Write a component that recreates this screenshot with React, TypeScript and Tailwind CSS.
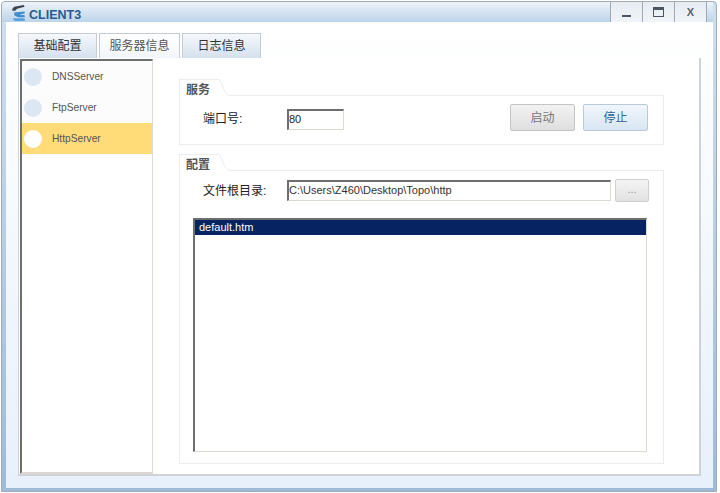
const FONT = 'font-["Liberation_Sans","Noto_Sans_CJK_SC",sans-serif]';

function AppIcon() {
  return (
    <svg width="18" height="18" viewBox="0 0 18 19" className="mt-[2px] shrink-0">
      <path d="M2 5 L4 3 L14 1 L15 3 L7 5 L5 7 L2 7 Z" fill="#3c4650" />
      <path d="M4 9 L15 8 L15 10 L9 11 L15 12 L15 14 L8 14 L4 12 Z" fill="#3f8ccf" />
      <path d="M3 15 L15 15 L15 18 L5 18 L3 17 Z" fill="#5aa3de" />
    </svg>
  );
}

function WindowButton({ children, last }: { children: React.ReactNode; last?: boolean }) {
  return (
    <div
      className={`flex h-[21px] items-center justify-center border-b border-l border-[#9fa8b3] ${
        last ? 'w-[33px] border-r' : 'w-[32px]'
      } bg-gradient-to-b from-[#e6ecf3] to-[#f1f4f8]`}
    >
      {children}
    </div>
  );
}

function Tab({ label, active, width }: { label: string; active?: boolean; width: string }) {
  return (
    <div
      className={`flex h-[25px] items-center justify-center border border-b-0 border-[#c5cbd2] text-[12px] ${width} ${
        active
          ? 'bg-gradient-to-b from-white to-[#f3f6fa] text-[#555]'
          : 'bg-gradient-to-b from-[#f5f8fc] to-[#d5e1ee] text-[#333]'
      }`}
    >
      {label}
    </div>
  );
}

function ServerRow({ name, selected }: { name: string; selected?: boolean }) {
  return (
    <div className={`flex h-[31px] items-center pl-[2px] ${selected ? 'bg-[#ffdc78]' : ''}`}>
      <div className={`h-[18px] w-[18px] rounded-full ${selected ? 'bg-white' : 'bg-[#dce7f3]'}`} />
      <span className="ml-[10px] text-[10.2px] text-[#555]">{name}</span>
    </div>
  );
}

function GroupBox({ title, className, children }: { title: string; className: string; children: React.ReactNode }) {
  return (
    <div className={`flex flex-col ${className}`}>
      <div className="flex h-[17px] shrink-0 items-end">
        <div className="flex h-[17px] w-[39px] items-center border-l border-t border-[#ececec] bg-white pl-[6px] pt-[3px] text-[12px] font-bold text-[#555]">
          {title}
        </div>
        <svg width="13" height="17" viewBox="0 0 13 17" className="shrink-0">
          <path d="M0 0.5 L1 0.5 C4 3 6 16.5 12 16.5 L13 16.5" fill="none" stroke="#ececec" />
        </svg>
        <div className="h-px flex-1 bg-[#ececec]" />
      </div>
      <div className="min-h-0 flex-1 border border-t-0 border-[#ececec]">{children}</div>
    </div>
  );
}

function Sunken({ className, children }: { className: string; children?: React.ReactNode }) {
  return (
    <div className={`border-t-2 border-l-2 border-r border-b border-t-[#6e6e6e] border-l-[#6e6e6e] border-r-[#dcd9d2] border-b-[#dcd9d2] bg-white ${className}`}>
      {children}
    </div>
  );
}

export default function App() {
  return (
    <div className={`h-[493px] w-[720px] overflow-hidden bg-white pl-px pt-px ${FONT}`}>
      <div className="flex h-[491px] w-[716px] flex-col rounded-t-[4px] border border-[#a3abb4] bg-gradient-to-b from-[#cfe0f0] to-[#9dbbd8] pb-[3px] pr-[3px]">
        <div className="flex h-[20px] shrink-0 items-start rounded-tl-[4px] bg-gradient-to-b from-[#eef3f9] to-[#bcd4ea] pl-[8px]">
          <AppIcon />
          <span className="ml-px mt-[6px] text-[12.5px] font-bold leading-[15px] text-[#2a5a8e]">CLIENT3</span>
          <div className="ml-auto mr-[6px] flex">
            <WindowButton>
              <div className="mt-[8px] h-[2px] w-[9px] bg-[#4a5560]" />
            </WindowButton>
            <WindowButton>
              <div className="h-[10px] w-[11px] border border-t-[3px] border-[#4a5560]" />
            </WindowButton>
            <WindowButton last>
              <span className="text-[11px] font-bold text-[#5a6570]">X</span>
            </WindowButton>
          </div>
        </div>
        <div className="ml-[4px] flex min-h-0 flex-1 flex-col bg-gradient-to-b from-white to-[#e8f0fc] pl-[12px] pr-[12px] pt-[11px]">
          <div className="flex gap-[2px]">
            <Tab label="基础配置" width="w-[79px]" />
            <Tab label="服务器信息" width="w-[81px]" active />
            <Tab label="日志信息" width="w-[79px]" />
          </div>
          <div className="mb-[12px] flex min-h-0 flex-1 border-b-2 border-l border-r-2 border-[#cfd2d6] bg-white">
            <div className="ml-px mt-px flex w-[133px] flex-col border-b-2 border-l-2 border-r border-t-2 border-b-[#dcd9d2] border-l-[#6e6e6e] border-r-[#dcd9d2] border-t-[#6e6e6e] bg-[#fcfcfc]">
              <ServerRow name="DNSServer" />
              <ServerRow name="FtpServer" />
              <ServerRow name="HttpServer" selected />
              <div className="flex-1 bg-white" />
            </div>
            <div className="flex flex-1 flex-col pl-[26px] pr-[35px] pt-[21px]">
              <GroupBox title="服务" className="h-[66px]">
                <div className="flex items-start">
                  <span className="ml-[23px] mt-[13px] w-[84px] text-[12px] leading-[21px] text-[#222]">端口号:</span>
                  <Sunken className="mt-[13px] h-[21px] w-[57px] text-[11px] leading-[17px] text-[#222]">80</Sunken>
                  <button className="ml-[166px] mt-[8px] h-[27px] w-[65px] rounded-[2px] border border-[#c4c4c4] bg-gradient-to-b from-[#f2f2f2] to-[#dfdfdf] text-[12px] text-[#777]">
                    启动
                  </button>
                  <button className="ml-[8px] mt-[8px] h-[27px] w-[65px] rounded-[2px] border border-[#b9c9da] bg-gradient-to-b from-[#f1f6fb] to-[#d8e6f3] text-[12px] text-[#2f6496]">
                    停止
                  </button>
                </div>
              </GroupBox>
              <GroupBox title="配置" className="mt-[9px] h-[310px]">
                <div className="flex h-full flex-col pb-[11px] pl-[13px] pr-[16px] pt-[9px]">
                  <div className="-mr-[2px] flex h-[21px] shrink-0 items-center">
                    <span className="ml-[10px] w-[84px] shrink-0 text-[12px] text-[#222]">文件根目录:</span>
                    <Sunken className="h-[21px] w-[324px] shrink-0 text-[11px] leading-[17px] text-[#333]">
                      C:\Users\Z460\Desktop\Topo\http
                    </Sunken>
                    <div className="ml-[4px] flex h-[23px] w-[34px] shrink-0 items-center justify-center rounded-[2px] border border-[#cfcfcf] bg-gradient-to-b from-[#f4f4f4] to-[#e2e2e2] pb-[3px] text-[11px] text-[#999]">
                      ...
                    </div>
                  </div>
                  <Sunken className="mt-[17px] min-h-0 flex-1">
                    <div className="flex h-[15px] items-center bg-[#072361] pl-[4px] text-[11px] text-white">default.htm</div>
                  </Sunken>
                </div>
              </GroupBox>
            </div>
          </div>
        </div>
      </div>
    </div>
  );
}
